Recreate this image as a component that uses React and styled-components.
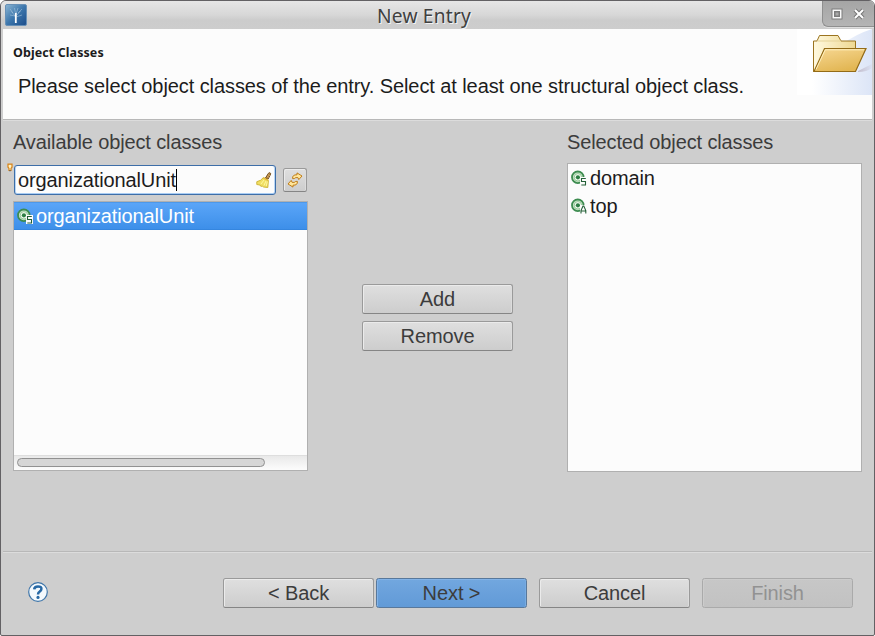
import React from "react";
import styled, { createGlobalStyle, css } from "styled-components";

const GlobalStyle = createGlobalStyle`
  * { box-sizing: border-box; }
  html, body { margin: 0; background: #fff; }
  body { font-family: "Liberation Sans", Arial, sans-serif; overflow: hidden; }
`;

const Window = styled.div`
  width: 875px;
  height: 636px;
  display: flex;
  flex-direction: column;
  background: #cecece;
  border: 1px solid #636164;
  border-radius: 6px 6px 2px 2px;
  overflow: hidden;
  font-size: 20px;
  letter-spacing: -0.12px;
  color: #3c3c3c;
`;

const TitleBar = styled.header`
  height: 28px;
  flex: none;
  display: grid;
  grid-template-columns: 52px 1fr 52px;
  background: linear-gradient(#e6e6e6, #d7d7d7 50%, #cccccc 68%, #cdcdcd);
`;

const AppIcon = styled.svg`
  width: 22px;
  height: 22px;
  margin: 3px 0 0 4px;
`;

const Title = styled.h1`
  margin: 0;
  text-align: center;
  font: 400 19.2px/30px "Noto Sans", "Open Sans", sans-serif;
  letter-spacing: 0.2px;
  color: #404040;
  padding-right: 27px;
  text-shadow: 1px 1px 0 #f3f3f3;
`;

const WindowControls = styled.div`
  height: 26px;
  display: flex;
  align-items: center;
  padding-left: 8px;
  gap: 10px;
  background: linear-gradient(#a5a5a5, #b4b4b4);
  border-left: 1px solid #8f8f8f;
  border-bottom: 1px solid #8f8f8f;
  border-bottom-left-radius: 6px;
  box-shadow: 0 1px 0 #dedede;
`;

const Banner = styled.section`
  height: 90px;
  flex: none;
  margin: 0 2px;
  display: flex;
  justify-content: space-between;
  background: #fcfcfc;
`;

const BannerText = styled.div`
  padding-left: 10px;
  color: #1c1c1c;
`;

const BannerHeading = styled.h2`
  margin: 15px 0 0;
  font: 700 12.5px/18px "Noto Sans", "Open Sans", sans-serif;
  letter-spacing: 0.08px;
`;

const BannerMessage = styled.p`
  margin: 12px 0 0 5px;
  line-height: 24px;
  font-size: 20px;
  letter-spacing: -0.085px;
  white-space: nowrap;
`;

const BannerArt = styled.svg`
  width: 75px;
  height: 66px;
  flex: none;
`;

const Groove = styled.div`
  height: 2px;
  flex: none;
  margin: 0 2px;
  background: linear-gradient(#b8b8b8 50%, #dcdcdc 50%);
`;

const Content = styled.main`
  flex: 1;
  display: grid;
  grid-template-columns: 295px 151px 295px;
  justify-content: space-between;
  padding: 9px 12px 0;
`;

const Column = styled.section`
  display: flex;
  flex-direction: column;
`;

const Label = styled.div`
  height: 24px;
  line-height: 24px;
  margin-bottom: ${(p) => p.$gap}px;
  white-space: nowrap;
`;

const FilterRow = styled.div`
  display: flex;
  align-items: center;
  gap: 7px;
  padding-left: 1px;
  height: 30px;
  margin-bottom: 6px;
`;

const Filter = styled.div`
  position: relative;
  width: 262px;
  height: 30px;
  display: flex;
  align-items: center;
  justify-content: space-between;
  padding: 0 3px;
  background: #fcfcfc;
  border: 1px solid #3e6ea8;
  border-radius: 3px;
  box-shadow: inset 0 -1px 0 #a9cdf4, inset 1px 0 0 #b9d6f5, inset -1px 0 0 #b9d6f5;
  color: #1c1c1c;
`;

const FilterText = styled.span`
  line-height: 22px;
  border-right: 1px solid #000;
`;

const HintBulb = styled.svg`
  position: absolute;
  left: -8px;
  top: -3px;
  width: 6px;
  height: 9px;
`;

const raised = css`
  border: 1px solid #9a9a9a;
  border-bottom-color: #858585;
  border-radius: 2.5px;
  background: linear-gradient(#dfdfdf, #cdcdcd);
  box-shadow: inset 1px 1px 0 #ebebeb, inset -1px 0 0 #dcdcdc;
`;

const IconButton = styled.button`
  ${raised}
  width: 24px;
  height: 24px;
  padding: 0;
  display: flex;
  align-items: center;
  justify-content: center;
`;

const tones = {
  normal: css`
    color: #3c3c3c;
  `,
  primary: css`
    color: #3c3c3c;
    border-color: #58789b;
    background: linear-gradient(#72a7df, #619ad7);
    box-shadow: inset 1px 1px 0 #82b3e8, inset -1px 0 0 #77abe2;
  `,
  disabled: css`
    color: #929292;
    border-color: #aaaaaa;
    background: linear-gradient(#c7c7c7, #c2c2c2);
    box-shadow: inset 1px 1px 0 #cccccc;
  `,
};

const Button = styled.button`
  ${raised}
  width: 151px;
  height: 30px;
  padding: 0;
  font: 400 20px/28px "Liberation Sans", Arial, sans-serif;
  letter-spacing: -0.1px;
  ${(p) => tones[p.$tone || "normal"]}
`;

const List = styled.div`
  height: ${(p) => p.$height}px;
  display: flex;
  flex-direction: column;
  background: #fcfcfc;
  border: 1px solid #b0b0b0;
  color: #1c1c1c;
`;

const Item = styled.div`
  height: 28px;
  flex: none;
  display: flex;
  align-items: center;
  gap: 3px;
  padding-left: 3px;
  line-height: 28px;
  ${(p) =>
    p.$selected &&
    css`
      color: #fff;
      background: linear-gradient(#5aa5f8, #3d8fe9);
      border-top: 1px solid #4d98e9;
      border-bottom: 1px solid #3586df;
    `}
`;

const ScrollTrack = styled.div`
  margin-top: auto;
  height: 15px;
  padding: 2px 3px;
  border-top: 1px solid #dedede;
  background: linear-gradient(#e9e9e9, #fcfcfc);
`;

const ScrollThumb = styled.div`
  width: 248px;
  height: 9px;
  border: 1px solid #919191;
  border-radius: 5px;
  background: #d6d6d6;
`;

const Actions = styled.div`
  padding-top: 154px;
  display: flex;
  flex-direction: column;
  gap: 7px;
`;

const Footer = styled.footer`
  height: 82px;
  flex: none;
  display: flex;
  align-items: flex-start;
  padding: 25px 21px 0 27px;
`;

const HelpIcon = styled.svg`
  width: 20px;
  height: 20px;
  margin-top: 4px;
`;

const Navigation = styled.nav`
  margin-left: auto;
  display: flex;
  gap: 12px;
`;

const StepPair = styled.div`
  display: flex;
  gap: 2px;
`;

function ClassIcon({ kind }) {
  return (
    <svg width="16" height="16" viewBox="0 0 16 16">
      <circle cx="6.8" cy="7.3" r="5.8" fill="#c5e3c4" stroke="#3d8c50" strokeWidth="1.8" />
      <circle cx="6.9" cy="7.3" r="3.7" fill="#f4faf1" stroke="#8fc492" strokeWidth=".9" />
      <circle cx="6.9" cy="7.3" r="2.1" fill="#2d7e43" />
      <path d="M9 7h7v9H9z" fill="#fcfcfc" />
      {kind === "S" ? (
        <path d="M14.8 8.5h-4.3v3h4v3.5h-4.2" fill="none" stroke="#236037" strokeWidth="1.1" />
      ) : (
        <path d="M10 15.5v-3l2-4.5h.8l2 4.5v3M10 13h4.8" fill="none" stroke="#236037" strokeWidth="1.1" />
      )}
    </svg>
  );
}

function BroomIcon() {
  return (
    <svg width="16" height="18" viewBox="0 0 16 18">
      <path d="M9.5 7 12.4 2.3Q13.2 1.2 14.2 1.9T14.2 4L12 8.3Z" fill="#b98743" stroke="#75501f" />
      <path d="M12 3.6l2 1.1M11 5.2l1.8 1.2" stroke="#dcb46d" strokeWidth=".7" />
      <path d="M7.3 6.6 12.4 9.4 11.8 16.5 7.5 16 6.4 15.2 4.8 15.3 4 14 .8 13.5V10.7Q5 10 7.3 6.6Z" fill="#f0df62" stroke="#d0b63d" />
      <path d="M8 9 5 13M10 10 8 14.5M11.3 10.5l-1 4.5" stroke="#fff6a0" fill="none" />
      <path d="M7.5 6.9l4.6 2.5" stroke="#e3b93d" strokeWidth="1.4" />
    </svg>
  );
}

function RefreshIcon() {
  return (
    <svg width="16" height="16" viewBox="0 0 16 16">
      <g fill="#ffe69b" stroke="#bf7d18" strokeWidth="1" strokeLinejoin="round">
        <path d="M7.3 6.6H5.6Q5.2 2.6 10 2.8V.9L15 4 11.8 7.6 11 5.7Q8.4 5 7.3 6.6Z" />
        <path d="M8.7 9.4H10.4Q10.8 13.4 6 13.2V15.1L1 12 4.2 8.4 5 10.3Q7.6 11 8.7 9.4Z" />
      </g>
    </svg>
  );
}

export default function App() {
  return (
    <>
      <GlobalStyle />
      <Window>
        <TitleBar>
          <AppIcon viewBox="0 0 22 22">
            <defs>
              <linearGradient id="tile" x1="0" y1="0" x2="1" y2="1">
                <stop offset="0" stopColor="#8cb6d4" />
                <stop offset=".5" stopColor="#3c76ac" />
                <stop offset="1" stopColor="#1b4c8a" />
              </linearGradient>
            </defs>
            <rect x=".5" y=".5" width="21" height="21" rx="1.5" fill="url(#tile)" stroke="#6790b7" />
            <path d="M10.8 13 6.5 7.5M10.8 11 9.5 4M11 12l4.5-5M11 13l6-2M10 12l-5-1M11 10l2-6M13 9l4-4M8 9 5 5" stroke="#b8d2e4" strokeWidth=".65" opacity=".75" fill="none" />
            <path d="M10.8 9v10" stroke="#fff" strokeWidth="1.8" />
          </AppIcon>
          <Title>New Entry</Title>
          <WindowControls>
            <svg width="12" height="12" viewBox="0 0 12 12">
              <path d="M.5.5h11v11H.5z" fill="#7d7d7d" />
              <path d="M2.25 2.25h7.5v7.5h-7.5z" fill="none" stroke="#f8f8f8" strokeWidth="1.5" />
              <path d="M4 4h4v4H4z" fill="#a9a9a9" stroke="#7d7d7d" />
            </svg>
            <svg width="12" height="12" viewBox="0 0 12 12">
              <path d="M2 2l8 8M10 2l-8 8" stroke="#777" strokeWidth="4" />
              <path d="M2 2l8 8M10 2l-8 8" stroke="#fff" strokeWidth="2" />
            </svg>
          </WindowControls>
        </TitleBar>
        <Banner>
          <BannerText>
            <BannerHeading>Object Classes</BannerHeading>
            <BannerMessage>
              Please select object classes of the entry. Select at least one structural object class.
            </BannerMessage>
          </BannerText>
          <BannerArt viewBox="0 0 75 66">
            <defs>
              <linearGradient id="wash">
                <stop offset="0" stopColor="#ffffff" />
                <stop offset="1" stopColor="#dce5f7" />
              </linearGradient>
              <linearGradient id="back">
                <stop offset="0" stopColor="#fff9df" />
                <stop offset="1" stopColor="#eed892" />
              </linearGradient>
              <linearGradient id="front" x1="0" y1="0" x2=".5" y2="1">
                <stop offset="0" stopColor="#f7d894" />
                <stop offset="1" stopColor="#e2b653" />
              </linearGradient>
              <linearGradient id="shade">
                <stop offset="0" stopColor="#a99aaa" />
                <stop offset="1" stopColor="#d9dff0" />
              </linearGradient>
            </defs>
            <path d="M0 0h75v66H0z" fill="#fff" />
            <path d="M15 43Q43 10 75 0v66H15Z" fill="url(#wash)" />
            <path d="M61 42 75 35v4q-5 4-14 4Z" fill="url(#shade)" opacity=".55" />
            <path d="M16.5 42.5V12H20l2.5-5.5H41L44 12h14.5v30.5Z" fill="url(#back)" stroke="#9b7420" />
            <path d="M20 12h24" stroke="#e5d399" />
            <path d="M17 42.5 27.5 19.5H69L58.5 42.5Z" fill="url(#front)" stroke="#936b17" strokeWidth="1.2" />
            <path d="M19 40.5 28.3 20.8H67" stroke="#fff0be" fill="none" />
          </BannerArt>
        </Banner>
        <Groove />
        <Content>
          <Column>
            <Label $gap={11}>Available object classes</Label>
            <FilterRow>
              <Filter>
                <HintBulb viewBox="0 0 6 9">
                  <path d="M1 1.2h4v3L4 5.5v2H2v-2L1 4.2Z" fill="#fff4c4" stroke="#d98318" strokeWidth="1.2" />
                  <path d="M2 7.7h2" stroke="#75664f" />
                </HintBulb>
                <FilterText>organizationalUnit</FilterText>
                <BroomIcon />
              </Filter>
              <IconButton aria-label="Refresh"><RefreshIcon /></IconButton>
            </FilterRow>
            <List $height={270}>
              <Item $selected><ClassIcon kind="S" />organizationalUnit</Item>
              <ScrollTrack><ScrollThumb /></ScrollTrack>
            </List>
          </Column>
          <Actions>
            <Button>Add</Button>
            <Button>Remove</Button>
          </Actions>
          <Column>
            <Label $gap={9}>Selected object classes</Label>
            <List $height={309}>
              <Item><ClassIcon kind="S" />domain</Item>
              <Item><ClassIcon kind="A" />top</Item>
            </List>
          </Column>
        </Content>
        <Groove />
        <Footer>
          <HelpIcon viewBox="0 0 20 20">
            <circle cx="10" cy="10" r="9.3" fill="#f4f9fd" stroke="#3f76aa" strokeWidth="1.2" />
            <path d="M6.2 7.4Q6.4 4.4 10 4.4T13.4 7q0 1.5-1.8 2.6Q10 10.5 10 12.6" fill="none" stroke="#2869a5" strokeWidth="2.5" />
            <circle cx="10" cy="15.4" r="1.6" fill="#2869a5" />
          </HelpIcon>
          <Navigation>
            <StepPair>
              <Button>&lt; Back</Button>
              <Button $tone="primary">Next &gt;</Button>
            </StepPair>
            <Button>Cancel</Button>
            <Button $tone="disabled" disabled>Finish</Button>
          </Navigation>
        </Footer>
      </Window>
    </>
  );
}
